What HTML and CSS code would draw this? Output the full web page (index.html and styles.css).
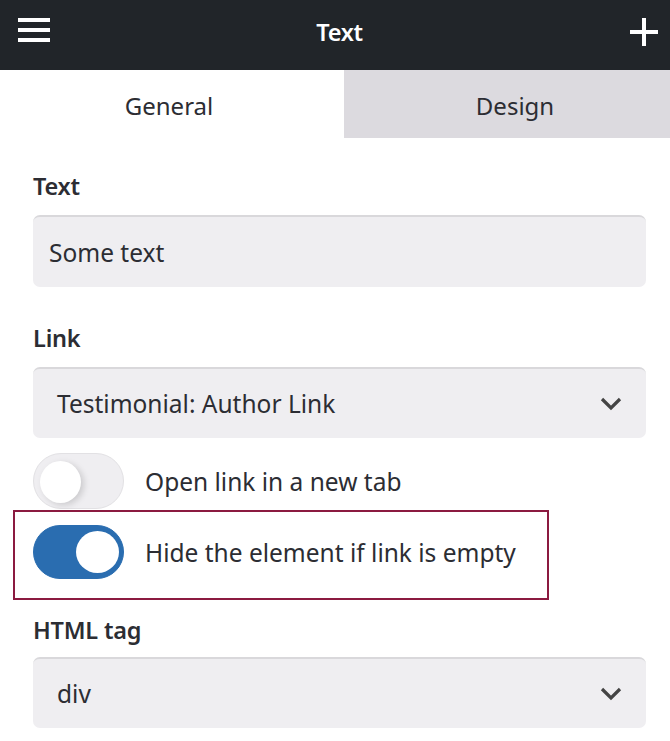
FILE: index.html
```html
<!DOCTYPE html>
<html>
<head>
<meta charset="utf-8">
<link rel="stylesheet" href="styles.css">
</head>
<body>
<header class="topbar">
  <svg class="icon-menu" width="32" height="24" viewBox="0 0 32 24"><rect x="0" y="0" width="32" height="4" fill="#fff"/><rect x="0" y="10" width="32" height="4" fill="#fff"/><rect x="0" y="20" width="32" height="4" fill="#fff"/></svg>
  <div class="title">Text</div>
  <svg class="icon-plus" width="30" height="30" viewBox="0 0 30 30"><rect x="13" y="1" width="4" height="28" fill="#fff"/><rect x="1" y="13" width="28" height="4" fill="#fff"/></svg>
</header>
<nav class="tabs">
  <div class="tab active">General</div>
  <div class="tab design">Design</div>
</nav>
<main class="form">
  <div class="label">Text</div>
  <div class="field">Some text</div>
  <div class="label">Link</div>
  <div class="field select"><span>Testimonial: Author Link</span>
    <svg class="chev" width="22" height="14" viewBox="0 0 22 14"><path d="M2 2 L11 11 L20 2" fill="none" stroke="#444" stroke-width="3.2"/></svg>
  </div>
  <div class="toggle-row first">
    <div class="switch"><div class="knob"></div></div>
    <span>Open link in a new tab</span>
  </div>
  <div class="highlight">
    <div class="toggle-row">
      <div class="switch on"><div class="knob"></div></div>
      <span>Hide the element if link is empty</span>
    </div>
  </div>
  <div class="label tag">HTML tag</div>
  <div class="field select"><span>div</span>
    <svg class="chev" width="22" height="14" viewBox="0 0 22 14"><path d="M2 2 L11 11 L20 2" fill="none" stroke="#444" stroke-width="3.2"/></svg>
  </div>
</main>
</body>
</html>
```
FILE: styles.css
```css
* { box-sizing: border-box; }
body {
  margin: 0;
  font-family: "Noto Sans", "Open Sans", sans-serif;
  color: #2c2d33;
  background: #fff;
}
.topbar {
  height: 70px;
  background: #212529;
  display: flex;
  align-items: center;
  justify-content: space-between;
  padding: 0 11px 0 18px;
}
.title {
  color: #fff;
  font-size: 23.5px;
  font-weight: 600;
  letter-spacing: -0.3px;
  margin-top: -7px;
  margin-left: 0;
}
.icon-plus { margin-top: -6px; }
.icon-menu { margin-top: -10px; }
.tabs {
  display: flex;
  height: 68px;
}
.tab {
  display: flex;
  align-items: center;
  justify-content: center;
  font-size: 24px;
  padding-top: 2px;
}
.tab.active { background: #fff; flex: 0 0 344px; padding-right: 6px; }
.tab.design { flex: 1; background: #dcdadf; padding-left: 16px; }
.form {
  padding: 33px 24px 0 33px;
}
.label {
  font-size: 23.5px;
  font-weight: 600;
  line-height: 30px;
  margin-bottom: 14px;
  letter-spacing: -0.2px;
}
.label.tag { margin-bottom: 12px; }
.field {
  height: 72px;
  background: #efeef1;
  border-radius: 7px;
  border-top: 2px solid #d9d8db;
  font-size: 24.5px;
  display: flex;
  align-items: center;
  padding: 0 16px;
  margin-bottom: 36px;
}
.field.select {
  padding: 0 24px 0 24px;
  justify-content: space-between;
  height: 71px;
  margin-bottom: 15px;
}
.toggle-row {
  display: flex;
  align-items: center;
  gap: 21px;
  font-size: 24.5px;
}
.toggle-row.first { margin-bottom: 1px; }
.switch {
  flex: 0 0 91px;
  width: 91px;
  height: 56px;
  border-radius: 28px;
  background: #efeef1;
  border: 1px solid #e2e1e4;
  position: relative;
}
.switch .knob {
  position: absolute;
  left: 6px;
  top: 7px;
  width: 41px;
  height: 42px;
  border-radius: 50%;
  background: #fff;
  box-shadow: 3px 2px 6px rgba(0,0,0,0.15);
}
.switch.on {
  background: #2a6db0;
  border-color: #2a6db0;
  height: 54px;
  border-radius: 27px;
}
.switch.on .knob {
  left: 42px;
  top: 5px;
  width: 43px;
  height: 42px;
  box-shadow: none;
}
.highlight {
  margin: 0 97px 0 -20px;
  border: 2px solid #8b1a40;
  padding: 13px 0 19px 18px;
  margin-bottom: 15px;
}
```
